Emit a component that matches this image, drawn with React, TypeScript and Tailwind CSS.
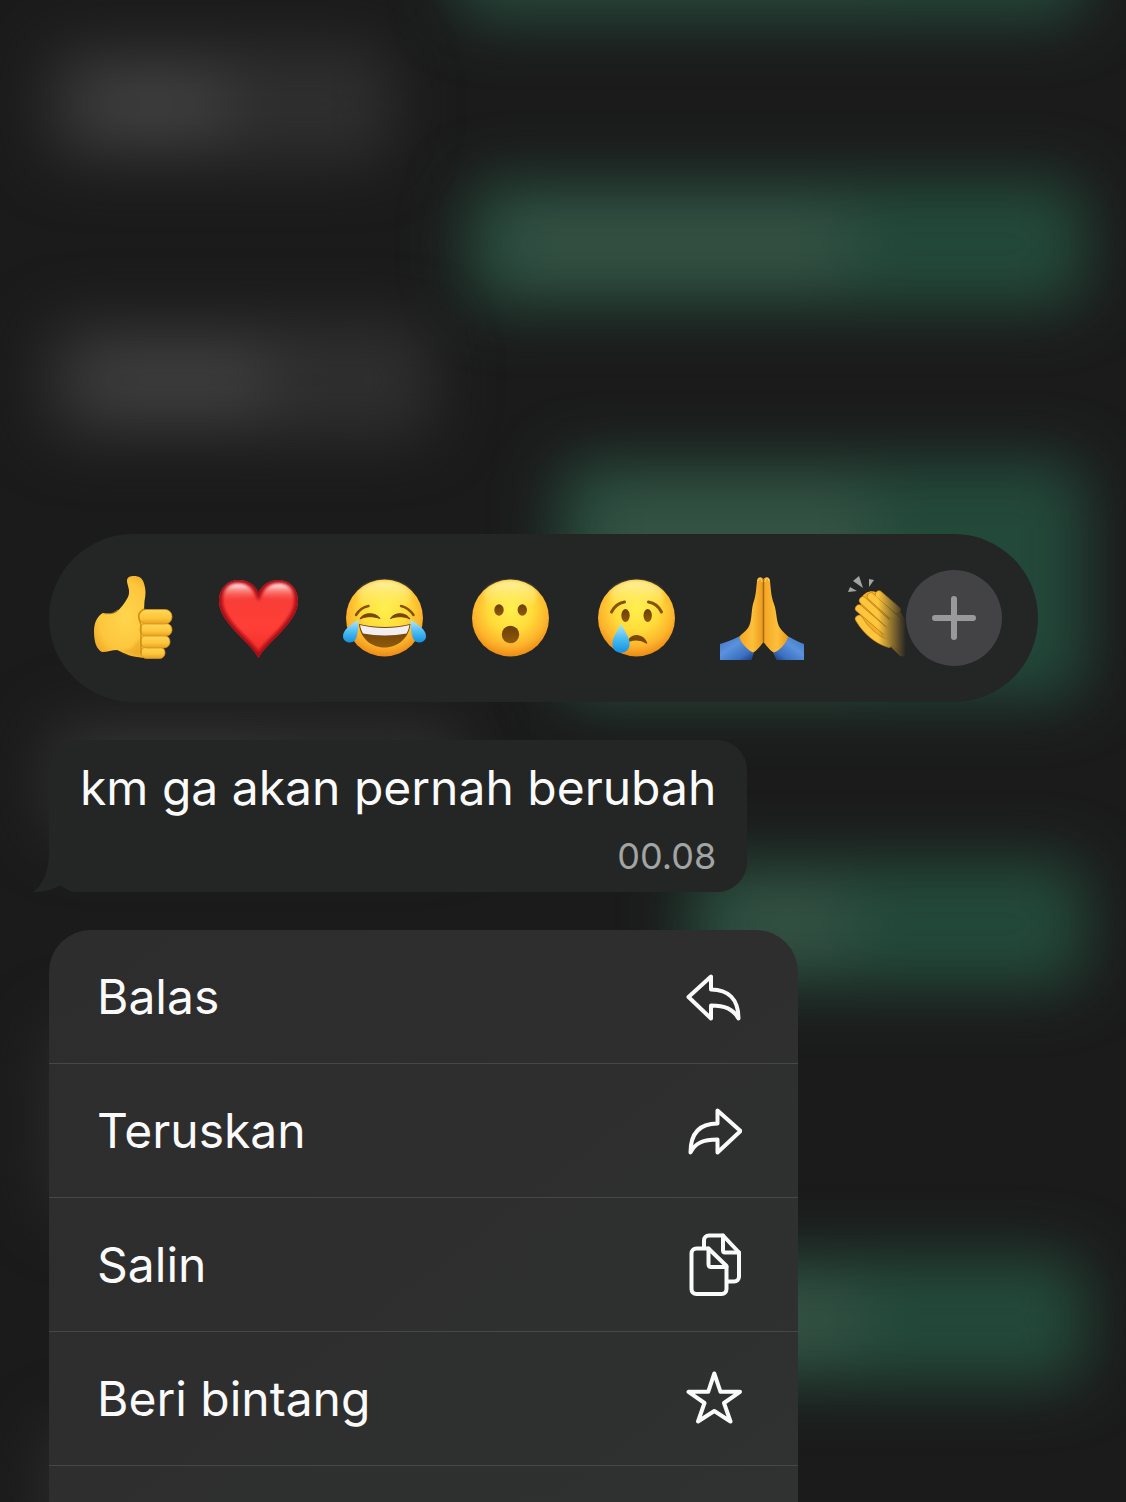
import type { ReactNode } from "react";

function Defs() {
  return (
    <svg width="0" height="0" className="absolute" aria-hidden="true">
      <defs>
        <radialGradient id="face" cx="0.5" cy="0.38" r="0.64">
          <stop offset="0" stopColor="#fff04c" />
          <stop offset="0.45" stopColor="#ffdc3a" />
          <stop offset="0.76" stopColor="#fdb42c" />
          <stop offset="1" stopColor="#ea8412" />
        </radialGradient>
        <linearGradient id="shine" x1="0" y1="0" x2="0" y2="1">
          <stop offset="0" stopColor="#fff6b8" stopOpacity="0.85" />
          <stop offset="1" stopColor="#ffee60" stopOpacity="0" />
        </linearGradient>
        <linearGradient id="brown" x1="0" y1="0" x2="0" y2="1">
          <stop offset="0" stopColor="#6b3d08" />
          <stop offset="1" stopColor="#8f5a0c" />
        </linearGradient>
        <linearGradient id="tear" x1="0" y1="0" x2="0" y2="1">
          <stop offset="0" stopColor="#b5e8fb" />
          <stop offset="0.5" stopColor="#4fbef3" />
          <stop offset="1" stopColor="#1591e0" />
        </linearGradient>
        <radialGradient id="hand" cx="0.5" cy="0.5" r="0.6">
          <stop offset="0" stopColor="#ffd54d" />
          <stop offset="0.7" stopColor="#fdc63c" />
          <stop offset="1" stopColor="#f0a824" />
        </radialGradient>
        <linearGradient id="finger" x1="0" y1="0" x2="0" y2="1">
          <stop offset="0" stopColor="#ffd858" />
          <stop offset="0.6" stopColor="#fdc53a" />
          <stop offset="1" stopColor="#e6a021" />
        </linearGradient>
        <linearGradient id="heart" x1="0" y1="0" x2="0" y2="1">
          <stop offset="0" stopColor="#f23a36" />
          <stop offset="0.6" stopColor="#ff3f37" />
          <stop offset="1" stopColor="#ee2a28" />
        </linearGradient>
        <clipPath id="heartClip">
          <path d="M41.500 82C37 73 27 65 18 55C8 44 2 35 2 25C2 13 10 4 21.500 4C31 4 38 9 41.500 16.500C45 9 52 4 61.500 4C73 4 81 13 81 25C81 35 75 44 65 55C56 65 46 73 41.500 82Z" />
        </clipPath>
        <filter id="soft" x="-20%" y="-20%" width="140%" height="140%">
          <feGaussianBlur stdDeviation="1.600" />
        </filter>
        <linearGradient id="gloss" x1="0" y1="0" x2="0" y2="1">
          <stop offset="0" stopColor="#fff" stopOpacity="1" />
          <stop offset="0.4" stopColor="#ffb5b0" stopOpacity="0.6" />
          <stop offset="1" stopColor="#ff5a50" stopOpacity="0" />
        </linearGradient>
        <linearGradient id="sleeveLeft" x1="0" y1="0" x2="1" y2="1">
          <stop offset="0" stopColor="#3d70c0" />
          <stop offset="0.4" stopColor="#5a92dd" />
          <stop offset="0.75" stopColor="#3b6fc0" />
          <stop offset="1" stopColor="#173a78" />
        </linearGradient>
        <linearGradient id="sleeveRight" x1="1" y1="0" x2="0" y2="1">
          <stop offset="0" stopColor="#3d70c0" />
          <stop offset="0.4" stopColor="#5a92dd" />
          <stop offset="0.75" stopColor="#3b6fc0" />
          <stop offset="1" stopColor="#173a78" />
        </linearGradient>
        <linearGradient id="palm" x1="0" y1="0" x2="1" y2="0">
          <stop offset="0" stopColor="#f3a524" />
          <stop offset="0.55" stopColor="#fdc03a" />
          <stop offset="1" stopColor="#e8981c" />
        </linearGradient>
      </defs>
    </svg>
  );
}

function Emoji({ children }: { children: ReactNode }) {
  return (
    <svg viewBox="0 0 84 84" className="block size-[84px] overflow-visible" fill="none" aria-hidden="true">
      {children}
    </svg>
  );
}

function Face() {
  return (
    <>
      <circle cx="41.5" cy="42" r="38.5" fill="url(#face)" />
      <ellipse cx="41.5" cy="20" rx="27" ry="15" fill="url(#shine)" filter="url(#soft)" />
    </>
  );
}

function ThumbsUp() {
  return (
    <Emoji>
      <path
        d="M12 37C18 38.500 22 38 25.500 36C30 32 34 27 37 21C40 15 36 9 36 5C36 1 39 0 43 0C48 0 51 2 52.500 6C55 13 55 18 53.500 25L53 34L66 40V80C60 83 52 82 46 81C38 80 33 77 26 74C21 74 17 76 11 76C5 73 3 65 3 55C3 47 6 40 12 37Z"
        fill="url(#hand)"
      />
      <path d="M27 74C36 78 42 79 51 80L49 62L41 72C36 74 31 75 27 74Z" fill="#e39c1c" opacity="0.5" filter="url(#soft)" />
      <path d="M11 37.500C18 39 23 38 27 34" stroke="#e9a824" strokeWidth="1.500" opacity="0.6" />
      <g fill="url(#finger)" stroke="#d4921a" strokeWidth="0.800">
        <rect x="50" y="71" width="24" height="11.500" rx="5.500" />
        <rect x="49.500" y="59.500" width="29.500" height="12.500" rx="6" />
        <rect x="49" y="47.500" width="32" height="12.500" rx="6" />
        <rect x="48" y="33.500" width="33" height="14.500" rx="7" />
      </g>
      <path d="M53 33C49 35 47 39 48 43L50 49V77" stroke="#c98612" strokeWidth="1.500" strokeLinecap="round" opacity="0.8" />
    </Emoji>
  );
}

function Heart() {
  return (
    <Emoji>
      <g clipPath="url(#heartClip)">
        <rect width="84" height="84" fill="url(#heart)" />
        <path
          d="M41.500 82C37 73 27 65 18 55C8 44 2 35 2 25C2 13 10 4 21.500 4C31 4 38 9 41.500 16.500C45 9 52 4 61.500 4C73 4 81 13 81 25C81 35 75 44 65 55C56 65 46 73 41.500 82Z"
          stroke="#a80a16"
          strokeWidth="7"
          filter="url(#soft)"
        />
      </g>
      <g filter="url(#soft)">
        <path d="M6 25C5 13 12 7.500 21 7.500C30 7.500 36 12 38 21C31 22 14 24 6 25Z" fill="url(#gloss)" />
        <path d="M77 25C78 13 71 7.500 62 7.500C53 7.500 47 12 45 21C52 22 69 24 77 25Z" fill="url(#gloss)" />
      </g>
    </Emoji>
  );
}

function Joy() {
  return (
    <Emoji>
      <Face />
      <path d="M13 39C16 34 20 31 25.500 30" stroke="#865007" strokeWidth="2.500" strokeLinecap="round" />
      <path d="M58 30C63 31 67 34 70.500 39" stroke="#865007" strokeWidth="2.500" strokeLinecap="round" />
      <path d="M17 43C20 36 33 36 37 42.500C30 40 23 40 17 43Z" fill="#764507" stroke="#764507" strokeLinejoin="round" />
      <path d="M47.500 42.500C51 36 63 36 67 43C61 40 54 40 47.500 42.500Z" fill="#764507" stroke="#764507" strokeLinejoin="round" />
      <path d="M16 48C32 52 52 52 67.500 48C66 62 55 71.500 41.500 71.500C28 71.500 17 62 16 48Z" fill="url(#brown)" />
      <path d="M17 49C33 53 51 53 66.500 49C66 52 65 55 63.500 57.500C50 60 34 60 20 57.500C18.500 55 17.500 52 17 49Z" fill="#f1eff2" />
      <path d="M15.500 44C8 48 0 54 0 60C0 64 3 66.500 7 66.500C14 66.500 15 58 15.500 44Z" fill="url(#tear)" />
      <path d="M67.500 44C75 48 83 54 83 60C83 64 80 66.500 76 66.500C69 66.500 68 58 67.500 44Z" fill="url(#tear)" />
    </Emoji>
  );
}

function Wow() {
  return (
    <Emoji>
      <Face />
      <ellipse cx="30" cy="34" rx="4.700" ry="5.800" fill="url(#brown)" />
      <ellipse cx="53.300" cy="34" rx="4.700" ry="5.800" fill="url(#brown)" />
      <circle cx="41.500" cy="58.500" r="8.700" fill="url(#brown)" />
    </Emoji>
  );
}

function Cry() {
  return (
    <Emoji>
      <Face />
      <path d="M16.500 36C19 31 23 27 29.500 26" stroke="#865007" strokeWidth="3" strokeLinecap="round" />
      <path d="M53.500 26C60 27 64 31 66.500 36" stroke="#865007" strokeWidth="3" strokeLinecap="round" />
      <ellipse cx="30.500" cy="39.500" rx="4.200" ry="6.400" fill="url(#brown)" />
      <ellipse cx="52.700" cy="39.500" rx="4.200" ry="6.400" fill="url(#brown)" />
      <path d="M34 64C38 58 48 58 51.500 67C46 63 40 63 34 65Z" fill="#7a4808" stroke="#7a4808" strokeWidth="1.500" strokeLinejoin="round" />
      <path d="M26 47C28 54 34.700 60 34.700 68C34.700 73 31 76.700 26 76.700C21 76.700 17.300 73 17.300 68C17.300 60 24 54 26 47Z" fill="url(#tear)" />
    </Emoji>
  );
}

function Pray() {
  return (
    <Emoji>
      <path d="M-1 68C5 66 12 64 18 60.500C21 68 26 73 33 76.500L30.500 84H-1Z" fill="url(#sleeveLeft)" />
      <path d="M83 68C78 66 73 64 67.500 60.500C64 68 59 73 52 76.500L55.500 84H83Z" fill="url(#sleeveRight)" />
      <path d="M42.500 3C40 0 36 1 36 5C35 14 35 20 32 28C30 36 31 46 27 52C24 56 20 58 18 61C21 69 27 74 32 76.500C36 75 40 69 42.500 66Z" fill="url(#palm)" />
      <path d="M42.500 3C45 0 49 1 49 5C50 14 50 20 53 28C56 36 55 46 59 52C62 56 65 58 67.500 61C64 69 59 74 53 76.500C49 75 45 69 42.500 66Z" fill="url(#palm)" />
      <path d="M42.500 3V66" stroke="#a9680e" strokeWidth="1.500" />
      <path d="M37 5C37 1.500 41 1.500 41 6M44 6C44 1.500 48 1.500 48 5" stroke="#ffdf8a" strokeWidth="1" />
    </Emoji>
  );
}

function Clap() {
  return (
    <Emoji>
      <g fill="#a3a4a5">
        <path d="M1 16L3 11L10 15Z" />
        <path d="M6 5L12 0L16 12Z" />
        <path d="M22 3L27 4L22 11Z" />
      </g>
      <path d="M14 22C20 14 26 14 34 18L48 27L62 50L64 82L53 80L44 71C32 68 20 56 13 44Z" fill="#f2ae2a" />
      <g strokeLinecap="round" stroke="#c5841a" strokeWidth="8">
        <path d="M32 18.500L50 34" />
        <path d="M24 20.500L50 44" />
        <path d="M16 24.500L48 54" />
        <path d="M12 32.500L44 60" />
        <path d="M12 43C20 56 30 64 42 68" />
      </g>
      <g strokeLinecap="round" stroke="#fdc63c" strokeWidth="6.500">
        <path d="M32 18.500L50 34" />
        <path d="M24 20.500L50 44" />
        <path d="M16 24.500L48 54" />
        <path d="M12 32.500L44 60" />
        <path d="M12 43C20 56 30 64 42 68" />
      </g>
      <path d="M44 40L60 50L62 66L55 74L44 69L36 60Z" fill="#f9bd36" />
    </Emoji>
  );
}

function StrokeIcon({ viewBox = "0 0 56 56", className = "size-14", children }: { viewBox?: string; className?: string; children: ReactNode }) {
  return (
    <svg
      viewBox={viewBox}
      className={`block shrink-0 ${className}`}
      fill="none"
      stroke="#fafafa"
      strokeWidth="4"
      strokeLinejoin="round"
      strokeLinecap="round"
      aria-hidden="true"
    >
      {children}
    </svg>
  );
}

const ReplyIcon = () => (
  <StrokeIcon>
    <path d="M2.500 28L25 7.500V20.500C42 20.500 52.500 30 52.500 49.500C47 40 39 36.500 25 36.500V49.500Z" />
  </StrokeIcon>
);

const ForwardIcon = () => (
  <StrokeIcon>
    <path d="M54.500 28L31.500 7.500V20.500C14 20.500 4.500 30 4.500 49.500C9 40 17 36.500 31.500 36.500V49.500Z" />
  </StrokeIcon>
);

const CopyIcon = () => (
  <StrokeIcon viewBox="0 0 56 64" className="h-16 w-14">
    <path d="M18 15V7.500C18 4.500 20 2.500 23 2.500H37L53 19.500V43.500C53 46.500 51 48.500 48 48.500H41" />
    <path d="M37 2.500V17.500C37 18.800 37.500 19.500 39 19.500H53" />
    <path d="M10.500 15.500H22.500L40.500 33V56C40.500 59 38.500 61 35.500 61H10.500C7.500 61 5.500 59 5.500 56V20.500C5.500 17.500 7.500 15.500 10.500 15.500Z" />
    <path d="M22.500 15.500V31C22.500 33 23 34 25 34H40.500" />
  </StrokeIcon>
);

const StarIcon = () => (
  <StrokeIcon>
    <path d="M28.300 2.500L34.500 20.800H54L38 32L44.500 50.500L28.300 40L12 50.500L18.500 32L2.500 20.800H22.200Z" />
  </StrokeIcon>
);

const reactions = [
  { label: "Jempol", art: <ThumbsUp /> },
  { label: "Hati", art: <Heart /> },
  { label: "Tertawa", art: <Joy /> },
  { label: "Kaget", art: <Wow /> },
  { label: "Sedih", art: <Cry /> },
  { label: "Terima kasih", art: <Pray /> },
  { label: "Tepuk tangan", art: <Clap /> },
];

const actions = [
  { label: "Balas", icon: <ReplyIcon /> },
  { label: "Teruskan", icon: <ForwardIcon /> },
  { label: "Salin", icon: <CopyIcon /> },
  { label: "Beri bintang", icon: <StarIcon /> },
];

/* Out-of-focus conversation behind the menu: bubble size, gap above, and the text inside it. */
const blurred = [
  { bubble: "self-end bg-[#24493b] w-[632px] h-[110px] -mt-[90px]", text: "bg-[#31493f] w-[400px] h-10" },
  { bubble: "self-start bg-[#2e2e2e] w-[350px] h-[120px] mt-6", text: "bg-[#444444] w-[150px] h-14" },
  { bubble: "self-end bg-[#23493a] w-[620px] h-[128px] mt-4", text: "bg-[#395346] w-[350px] h-16" },
  { bubble: "self-start bg-[#2e2e2e] w-[390px] h-[120px] mt-3", text: "bg-[#424242] w-[190px] h-14" },
  { bubble: "self-end bg-[#23493b] w-[530px] h-[240px] mt-5", text: "bg-[#355344] w-[280px] h-48" },
  { bubble: "self-start bg-[#2d2d2d] w-[420px] h-[120px] mt-5", text: "bg-[#363636] w-[200px] h-16" },
  { bubble: "self-end bg-[#23493a] w-[400px] h-[128px] mt-5", text: "bg-[#395346] w-[130px] h-16" },
  { bubble: "self-start bg-[#2a2a2a] w-[480px] h-[200px] mt-8", text: "bg-[#303030] w-[200px] h-20" },
  { bubble: "self-end bg-[#23493a] w-[500px] h-[128px] mt-9", text: "bg-[#395346] w-[240px] h-16" },
  { bubble: "self-start bg-[#2c2c2c] w-[400px] h-[120px] mt-10", text: "bg-[#323232] w-[200px] h-16" },
];

function Backdrop() {
  return (
    <div className="absolute inset-0 flex flex-col overflow-hidden pr-10 pl-11" aria-hidden="true">
      {blurred.map((item, i) => (
        <div key={i} className={`flex shrink-0 items-center rounded-[30px] px-9 blur-[30px] ${item.bubble}`}>
          <div className={`rounded-[20px] blur-[12px] ${item.text}`} />
        </div>
      ))}
    </div>
  );
}

export default function App() {
  return (
    <main className="relative flex min-h-screen flex-col overflow-hidden bg-[#1b1b1b] pt-[534px] font-['Inter','Liberation_Sans',sans-serif] text-[#fafafa]">
      <Defs />
      <Backdrop />

      <div className="relative flex grow flex-col items-start pl-[49px]">
        <div className="flex w-full pr-[88px]">
          <div className="flex h-[168px] min-w-0 grow items-center rounded-full bg-[#242525] pr-9 pl-[42px]">
            <div className="flex min-w-0 grow gap-[42px] overflow-hidden [mask-image:linear-gradient(to_right,black_calc(100%_-_28px),transparent)]">
              {reactions.map((r) => (
                <button key={r.label} type="button" aria-label={r.label} className="shrink-0">
                  {r.art}
                </button>
              ))}
            </div>
            <button type="button" aria-label="Reaksi lainnya" className="flex size-24 shrink-0 items-center justify-center rounded-full bg-[#434345]">
              <svg viewBox="0 0 44 44" className="size-11" fill="none" stroke="#99999b" strokeWidth="6" strokeLinecap="round" aria-hidden="true">
                <path d="M22 3V41M3 22H41" />
              </svg>
            </button>
          </div>
        </div>

        <div className="relative mt-[38px] rounded-[30px] bg-[#242625] px-[31px] pt-[18px] pb-[14px]">
          <svg viewBox="0 0 40 44" className="absolute bottom-0 -left-4 h-11 w-10" fill="#242625" aria-hidden="true">
            <path d="M16 0C16 20 13 34 0 44C12 44 22 41 29 36C32 40 36 43 40 44V0Z" />
          </svg>
          <p className="relative text-[48px] leading-[60px] whitespace-nowrap">km ga akan pernah berubah</p>
          <p className="relative mt-4 text-right text-[36px] leading-[44px] text-[#a3a4a4]">00.08</p>
        </div>

        <div className="mt-[38px] flex w-[749px] max-w-full grow flex-col overflow-hidden rounded-t-[42px] bg-linear-to-br from-[#2d2d2d] via-[#2e2e2e] to-[#2f3231]">
          {actions.map((a) => (
            <button key={a.label} type="button" className="flex h-[134px] shrink-0 items-center justify-between border-b border-[#464747] pr-14 pl-12 text-left text-[48px] leading-[60px]">
              <span>{a.label}</span>
              {a.icon}
            </button>
          ))}
          <div className="min-h-9 grow" />
        </div>
      </div>
    </main>
  );
}
